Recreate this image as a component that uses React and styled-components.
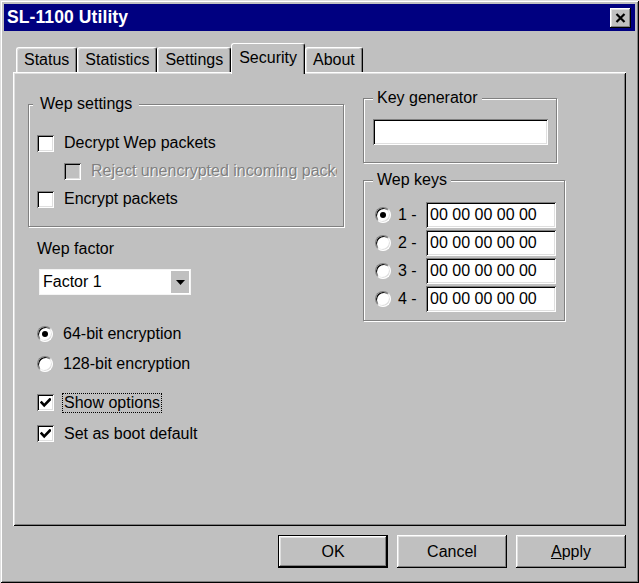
import React from 'react';
import styled, { createGlobalStyle, css } from 'styled-components';

const FACE = '#c0c0c0';

const Global = createGlobalStyle`
  html, body { margin: 0; padding: 0; background: ${FACE}; }
  body {
    font-family: "Liberation Sans", Arial, sans-serif;
    font-size: 16px;
    color: #000;
  }
  #root { width: 639px; height: 583px; }
  * { box-sizing: border-box; }
`;

const Window = styled.div`
  width: 639px;
  height: 583px;
  background: ${FACE};
  padding: 4px;
  box-shadow: inset 1px 1px 0 #dfdfdf, inset -1px -1px 0 #000,
    inset 2px 2px 0 #fff, inset -2px -2px 0 #808080;
  display: flex;
  flex-direction: column;
`;

const TitleBar = styled.div`
  height: 27px;
  background: #000080;
  display: flex;
  align-items: center;
  justify-content: space-between;
  padding: 0 4px 0 3px;
`;

const Title = styled.span`
  color: #fff;
  font-weight: bold;
  font-size: 17.5px;
  letter-spacing: 0.1px;
`;

const CloseButton = styled.button`
  width: 21px;
  height: 20px;
  padding: 0;
  border: 0;
  background: ${FACE};
  display: flex;
  align-items: center;
  justify-content: center;
  box-shadow: inset -1px -1px 0 #000, inset 1px 1px 0 #fff,
    inset -2px -2px 0 #808080, inset 2px 2px 0 #dfdfdf;
`;

const Body = styled.div`
  flex: 1;
  display: flex;
  flex-direction: column;
  padding: 12px 9px 0;
`;

const TabStrip = styled.div`
  height: 29px;
  display: flex;
  align-items: flex-end;
  padding-left: 3px;
`;

const Tab = styled.div`
  height: 25px;
  padding: 0 7px;
  display: flex;
  align-items: center;
  background: ${FACE};
  border-left: 1px solid #fff;
  border-top: 1px solid #fff;
  border-right: 1px solid #000;
  border-top-left-radius: 3px;
  border-top-right-radius: 3px;
  box-shadow: inset -1px 0 0 #808080, inset 1px 1px 0 #dfdfdf;
  white-space: nowrap;
  ${(p) =>
    p.$active &&
    css`
      height: 31px;
      margin-bottom: -2px;
      padding-bottom: 3px;
      position: relative;
      z-index: 1;
      box-shadow: inset -1px 0 0 #808080;
    `}
`;

const Panel = styled.div`
  height: 454px;
  background: ${FACE};
  box-shadow: inset 1px 1px 0 #fff, inset -1px -1px 0 #000,
    inset 2px 2px 0 #dfdfdf, inset -2px -2px 0 #808080;
  display: grid;
  grid-template-columns: 316px 202px;
  column-gap: 19px;
  align-items: start;
  padding-left: 15px;
`;

const Column = styled.div`
  display: flex;
  flex-direction: column;
  align-items: flex-start;
  padding-top: ${(p) => p.$top}px;
`;

const Group = styled.div`
  position: relative;
  width: ${(p) => p.$w}px;
  height: ${(p) => p.$h}px;
  margin-top: ${(p) => p.$mt || 0}px;
  padding: ${(p) => p.$pad};
  border: 1px solid #808080;
  box-shadow: inset 1px 1px 0 #fff, 1px 1px 0 #fff;
`;

const Legend = styled.span`
  position: absolute;
  top: -10px;
  left: ${(p) => p.$left}px;
  padding: 0 ${(p) => p.$padx}px;
  line-height: 18px;
  background: ${FACE};
  white-space: nowrap;
`;

const Row = styled.div`
  display: flex;
  align-items: center;
  height: ${(p) => p.$h || 28}px;
  gap: 10px;
  margin-left: ${(p) => p.$indent || 0}px;
  margin-top: ${(p) => p.$mt || 0}px;
  width: ${(p) => (p.$clip ? `${p.$clip}px` : 'auto')};
  overflow: ${(p) => (p.$clip ? 'hidden' : 'visible')};
  white-space: nowrap;
  flex-shrink: 0;
`;

const Text = styled.span`
  line-height: 18px;
  ${(p) =>
    p.$disabled &&
    css`
      color: #808080;
      text-shadow: 1px 1px 0 #fff;
    `}
  ${(p) =>
    p.$focus &&
    css`
      outline: 1px dotted #000;
      outline-offset: 0px;
      padding: 0 1px;
      margin-left: -1px;
    `}
`;

const CheckBox = styled.span`
  flex: 0 0 auto;
  width: 17px;
  height: 17px;
  background: ${(p) => (p.$disabled ? FACE : '#fff')};
  box-shadow: inset 1px 1px 0 #808080, inset -1px -1px 0 #fff,
    inset 2px 2px 0 #000, inset -2px -2px 0 #dfdfdf;
  display: flex;
  align-items: center;
  justify-content: center;
`;

const RadioBox = styled.span`
  flex: 0 0 auto;
  width: 16px;
  height: 16px;
  border-radius: 50%;
  background: #fff;
  border: 1px solid;
  border-color: #808080 #fff #fff #808080;
  box-shadow: inset 1px 1px 0 #000, inset -1px -1px 0 #dfdfdf;
  display: flex;
  align-items: center;
  justify-content: center;
`;

const Dot = styled.span`
  width: 6px;
  height: 6px;
  border-radius: 50%;
  background: #000;
`;

const FieldLabel = styled.div`
  margin-top: 13px;
  margin-left: 9px;
  line-height: 18px;
`;

const Select = styled.div`
  margin: 11px 0 0 11px;
  width: 152px;
  height: 26px;
  background: #fff;
  border: 1px solid #f4f4f4;
  display: flex;
  align-items: center;
  padding-left: 3px;
`;

const SelectValue = styled.span`
  flex: 1;
  line-height: 18px;
`;

const SelectButton = styled.span`
  width: 18px;
  height: 22px;
  margin-right: 1px;
  background: ${FACE};
  display: flex;
  align-items: center;
  justify-content: center;
`;

const TextField = styled.input`
  width: ${(p) => p.$w}px;
  height: 26px;
  border: 0;
  outline: none;
  margin: 0;
  padding: 0 4px;
  background: #fff;
  font-family: "Liberation Sans", Arial, sans-serif;
  font-size: 16px;
  color: #000;
  box-shadow: inset 1px 1px 0 #808080, inset -1px -1px 0 #fff,
    inset 2px 2px 0 #000, inset -2px -2px 0 #dfdfdf;
`;

const KeyList = styled.div`
  display: flex;
  flex-direction: column;
  gap: 2px;
`;

const KeyRow = styled.div`
  display: flex;
  align-items: center;
  height: 26px;
`;

const KeyLabel = styled.span`
  width: 28px;
  margin-left: 7px;
  line-height: 18px;
`;

const ButtonRow = styled.div`
  display: flex;
  justify-content: flex-end;
  gap: 9px;
  margin-top: 9px;
`;

const Button = styled.button`
  width: 110px;
  height: 33px;
  border: 0;
  padding: 0;
  background: ${FACE};
  font-family: "Liberation Sans", Arial, sans-serif;
  font-size: 16px;
  color: #000;
  box-shadow: inset -1px -1px 0 #000, inset 1px 1px 0 #fff,
    inset -2px -2px 0 #808080, inset 2px 2px 0 #dfdfdf;
  ${(p) =>
    p.$default &&
    css`
      box-shadow: inset 0 0 0 1px #000, inset -2px -2px 0 #000,
        inset 2px 2px 0 #fff, inset -3px -3px 0 #808080,
        inset 3px 3px 0 #dfdfdf;
    `}
`;

const CheckMark = () => (
  <svg width="11" height="10" viewBox="0 0 11 10">
    <path d="M1.5 4.5 L4.2 7.3 L9.8 1.5" fill="none" stroke="#000" strokeWidth="2.6" strokeLinecap="square" />
  </svg>
);

const Check = ({ checked, disabled, label, focus, indent, clip, h, mt }) => (
  <Row $indent={indent} $clip={clip} $h={h} $mt={mt}>
    <CheckBox $disabled={disabled}>{checked && <CheckMark />}</CheckBox>
    <Text $disabled={disabled} $focus={focus}>{label}</Text>
  </Row>
);

const Radio = ({ checked, label, h, mt }) => (
  <Row $h={h} $mt={mt}>
    <RadioBox>{checked && <Dot />}</RadioBox>
    <Text>{label}</Text>
  </Row>
);

const tabs = ['Status', 'Statistics', 'Settings', 'Security', 'About'];

export default function App() {
  return (
    <>
      <Global />
      <Window>
        <TitleBar>
          <Title>SL-1100 Utility</Title>
          <CloseButton aria-label="Close">
            <svg width="11" height="10" viewBox="0 0 11 10">
              <path d="M1.5 1 L9.5 9 M9.5 1 L1.5 9" stroke="#000" strokeWidth="2.2" />
            </svg>
          </CloseButton>
        </TitleBar>
        <Body>
          <TabStrip>
            {tabs.map((t) => (
              <Tab key={t} $active={t === 'Security'}>
                {t}
              </Tab>
            ))}
          </TabStrip>
          <Panel>
            <Column $top={32}>
              <Group $w={316} $h={123} $pad="24px 0 0 8px">
                <Legend $left={4} $padx={7}>Wep settings</Legend>
                <Check label="Decrypt Wep packets" />
                <Check label="Reject unencrypted incoming packets" disabled indent={27} clip={273} />
                <Check label="Encrypt packets" />
              </Group>
              <FieldLabel>Wep factor</FieldLabel>
              <Select>
                <SelectValue>Factor 1</SelectValue>
                <SelectButton>
                  <svg width="9" height="5" viewBox="0 0 9 5">
                    <polygon points="0,0 9,0 4.5,5" fill="#000" />
                  </svg>
                </SelectButton>
              </Select>
              <div style={{ marginLeft: 9 }}>
                <Radio checked label="64-bit encryption" h={30} mt={24} />
                <Radio label="128-bit encryption" h={30} />
                <Check checked focus label="Show options" h={31} mt={8} />
                <Check checked label="Set as boot default" h={31} />
              </div>
            </Column>
            <Column $top={26}>
              <Group $w={194} $h={65} $pad="20px 0 0 9px">
                <Legend $left={9} $padx={4}>Key generator</Legend>
                <TextField $w={175} readOnly value="" />
              </Group>
              <Group $w={202} $h={141} $mt={17} $pad="21px 0 0 11px">
                <Legend $left={9} $padx={4}>Wep keys</Legend>
                <KeyList>
                  {[1, 2, 3, 4].map((n) => (
                    <KeyRow key={n}>
                      <RadioBox>{n === 1 && <Dot />}</RadioBox>
                      <KeyLabel>{n} -</KeyLabel>
                      <TextField $w={130} readOnly value="00 00 00 00 00" />
                    </KeyRow>
                  ))}
                </KeyList>
              </Group>
            </Column>
          </Panel>
          <ButtonRow>
            <Button $default>OK</Button>
            <Button>Cancel</Button>
            <Button>
              <u>A</u>pply
            </Button>
          </ButtonRow>
        </Body>
      </Window>
    </>
  );
}
